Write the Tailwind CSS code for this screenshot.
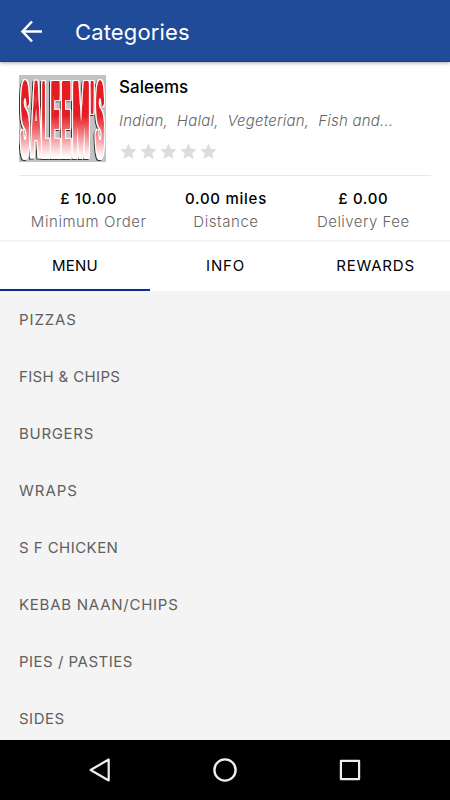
<!DOCTYPE html>
<html lang="en">
<head>
<meta charset="utf-8">
<title>Categories</title>
<script src="https://cdn.jsdelivr.net/npm/@tailwindcss/browser@4"></script>
</head>
<body class="w-[450px] h-[800px] overflow-hidden bg-[#f4f4f4] font-['Inter',sans-serif] flex flex-col">
<header class="relative z-10 h-[62px] shrink-0 bg-[#1f4b98] border-b border-[#173f87] shadow-[0_1px_4px_rgba(0,0,0,0.35)] flex items-center text-white">
  <svg class="ml-5 mt-px w-[23px] h-[23px]" viewBox="0 0 23 23" fill="none" stroke="#fff" stroke-width="2.5"><path d="M12 1.5 2.5 11.5 12 21.5M2.5 11.5H22"/></svg>
  <h1 class="ml-8 mt-[2px] text-[22px] leading-7"><span class="tracking-[0.15px]">Categories</span></h1>
</header>
<main class="bg-white shrink-0">
  <section class="mx-[19px] pt-[13px] h-[114px] border-b border-[#e8e8e8] flex">
    <svg class="w-[87px] h-[87px] shrink-0" viewBox="0 0 87 87">
      <defs>
        <linearGradient id="red" gradientUnits="userSpaceOnUse" x1="0" y1="0" x2="0" y2="15"><stop offset="0" stop-color="#e51b22"/><stop offset=".45" stop-color="#e51f26"/><stop offset="1" stop-color="#fff"/></linearGradient>
        <filter id="outline" x="-5%" y="-5%" width="110%" height="110%">
          <feMorphology in="SourceAlpha" operator="dilate" radius="1" result="outer"/>
          <feOffset in="outer" dx="-.7" dy=".5" result="shifted"/>
          <feFlood flood-color="#333"/><feComposite in2="shifted" operator="in" result="black"/>
          <feFlood flood-color="#fff"/><feComposite in2="outer" operator="in" result="white"/>
          <feMerge><feMergeNode in="black"/><feMergeNode in="white"/><feMergeNode in="SourceGraphic"/></feMerge>
        </filter>
      </defs>
      <rect width="87" height="87" fill="#c2c2c2"/>
      <g filter="url(#outline)" font-family="Liberation Sans" font-weight="bold" font-size="20" fill="url(#red)" stroke="url(#red)" stroke-width="1.6" stroke-linejoin="round">
        <text transform="translate(1.8 6.5) scale(.64 5.05)" y="14.4">S</text>
        <text transform="translate(12 6.5) scale(.7 5.05)" y="14.4">A</text>
        <text transform="translate(22.8 6.5) scale(.64 5.05)" y="14.4">L</text>
        <text transform="translate(31.8 6.5) scale(.7 5.05)" y="14.4">E</text>
        <text transform="translate(42.5 6.5) scale(.7 5.05)" y="14.4">E</text>
        <text transform="translate(53.5 6.5) scale(1.02 5.05)" y="14.4">M</text>
        <text transform="translate(71.3 6.5) scale(.8 5.05)" y="14.4">'</text>
        <text transform="translate(76.8 6.5) scale(.64 5.05)" y="14.4">S</text>
      </g>
    </svg>
    <div class="ml-[13px] whitespace-nowrap">
      <h2 class="text-[17px] leading-6 font-medium text-black"><span>Saleems</span></h2>
      <p class="mt-[10px] text-[15px] leading-6 italic font-light text-[#666] whitespace-pre"><span class="tracking-[0.22px]">Indian,  Halal,  Vegeterian,  Fish and...</span></p>
      <div class="mt-[10px] ml-px flex gap-[3px]">
        <svg class="w-[17px] h-[17px]" viewBox="0 0 17 17"><path id="star" fill="#dcdcdc" d="M8.5 .5 10.9 5.8 16.6 6.4 12.3 10.3 13.6 16 8.5 13 3.4 16 4.7 10.3 .4 6.4 6.1 5.8z"/></svg>
        <svg class="w-[17px] h-[17px]" viewBox="0 0 17 17"><use href="#star"/></svg>
        <svg class="w-[17px] h-[17px]" viewBox="0 0 17 17"><use href="#star"/></svg>
        <svg class="w-[17px] h-[17px]" viewBox="0 0 17 17"><use href="#star"/></svg>
        <svg class="w-[17px] h-[17px]" viewBox="0 0 17 17"><use href="#star"/></svg>
      </div>
    </div>
  </section>
  <section class="h-[66px] border-b-2 border-[#f5f5f5] pl-5 pr-[18px] pt-[11px] grid grid-cols-3 text-center text-[15px] leading-[23px] whitespace-nowrap">
    <div><p class="font-medium text-black"><span class="tracking-[0.65px]">£ 10.00</span></p><p class="font-light text-[#666]"><span class="tracking-[0.57px]">Minimum Order</span></p></div>
    <div><p class="font-medium text-black"><span class="tracking-[0.75px]">0.00 miles</span></p><p class="font-light text-[#666]"><span class="tracking-[0.57px]">Distance</span></p></div>
    <div><p class="font-medium text-black"><span class="tracking-[0.65px]">£ 0.00</span></p><p class="font-light text-[#666]"><span class="tracking-[0.47px]">Delivery Fee</span></p></div>
  </section>
  <nav class="h-[49px] grid grid-cols-3 text-center text-[15px] leading-[47px] text-black">
    <div class="border-b-[2px] border-[#0a2b91]"><span class="tracking-[0.2px]">MENU</span></div>
    <div class="pl-px"><span class="tracking-[0.8px]">INFO</span></div>
    <div class="pl-px"><span class="tracking-[0.8px]">REWARDS</span></div>
  </nav>
</main>
<ul class="flex-1 pl-[19px] text-[15px] leading-[57px] text-[#606060]">
  <li class="h-[57px]"><span class="tracking-[0.9px]">PIZZAS</span></li>
  <li class="h-[57px]"><span class="tracking-[0.35px]">FISH &amp; CHIPS</span></li>
  <li class="h-[57px]"><span class="tracking-[0.7px]">BURGERS</span></li>
  <li class="h-[57px]"><span class="tracking-[1px]">WRAPS</span></li>
  <li class="h-[57px]"><span class="tracking-[0.45px]">S F CHICKEN</span></li>
  <li class="h-[57px]"><span class="tracking-[0.75px]">KEBAB NAAN/CHIPS</span></li>
  <li class="h-[57px]"><span class="tracking-[0.5px]">PIES / PASTIES</span></li>
  <li class="h-[50px]"><span class="tracking-[0.5px]">SIDES</span></li>
</ul>
<footer class="h-[60px] shrink-0 bg-black grid grid-cols-[repeat(3,125px)] justify-center items-center justify-items-center">
  <svg class="w-6 h-6" viewBox="0 0 24 24" fill="none" stroke="#eee" stroke-width="2.2" stroke-linejoin="round"><path d="M2.6 12 20.7 1.5V22.5z"/></svg>
  <svg class="w-6 h-6" viewBox="0 0 24 24" fill="none" stroke="#eee" stroke-width="2.4"><circle cx="12" cy="12" r="10.6"/></svg>
  <svg class="w-6 h-6" viewBox="0 0 24 24" fill="none" stroke="#eee" stroke-width="2.2" stroke-linejoin="round"><rect x="2.9" y="2.9" width="18.2" height="18.2"/></svg>
</footer>
</body>
</html>
